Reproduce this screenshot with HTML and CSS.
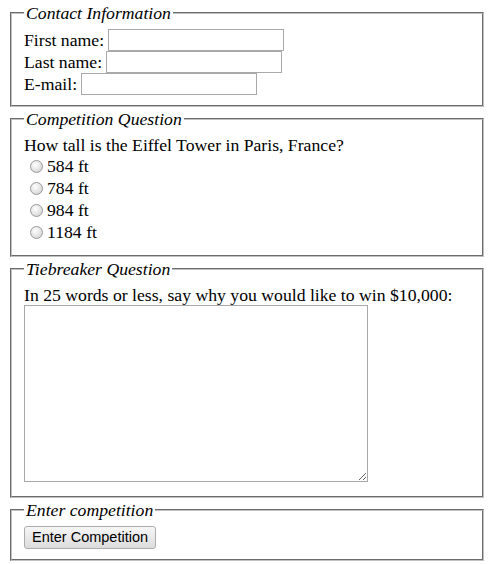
FILE: index.html
```html
<!DOCTYPE html>
<html>
<head>
<meta charset="utf-8">
<title>Competition</title>
<link rel="stylesheet" href="styles.css">
</head>
<body>
<form class="entry-form">
  <fieldset class="group">
    <legend class="group-title">Contact Information</legend>
    <div class="row"><label for="fn">First name:</label><input class="text-input" type="text" id="fn"></div>
    <div class="row"><label for="ln">Last name:</label><input class="text-input" type="text" id="ln"></div>
    <div class="row"><label for="em">E-mail:</label><input class="text-input" type="text" id="em"></div>
  </fieldset>
  <fieldset class="group group-quiz">
    <legend class="group-title">Competition Question</legend>
    <div class="question">How tall is the Eiffel Tower in Paris, France?</div>
    <div class="option"><input class="radio" type="radio" name="h" id="h1"><label for="h1">584 ft</label></div>
    <div class="option"><input class="radio" type="radio" name="h" id="h2"><label for="h2">784 ft</label></div>
    <div class="option"><input class="radio" type="radio" name="h" id="h3"><label for="h3">984 ft</label></div>
    <div class="option"><input class="radio" type="radio" name="h" id="h4"><label for="h4">1184 ft</label></div>
  </fieldset>
  <fieldset class="group">
    <legend class="group-title">Tiebreaker Question</legend>
    <label class="prompt" for="tb">In 25 words or less, say why you would like to win $10,000:</label>
    <textarea class="answer" id="tb"></textarea>
  </fieldset>
  <fieldset class="group group-last">
    <legend class="group-title">Enter competition</legend>
    <button class="submit" type="submit">Enter Competition</button>
  </fieldset>
</form>
</body>
</html>
```

FILE: styles.css
```css
html, body {
  background: #ffffff;
}
body {
  margin: 3px 5px 0 8px;
  font-family: "Liberation Serif", "Times New Roman", serif;
  font-size: 17.7px;
  color: #000;
}
.entry-form {
  display: flex;
  flex-direction: column;
}
.group {
  margin: 0 2px 2px;
  border: 2px groove #c0c0c0;
  padding: 6px 12px 10px;
}
.group-quiz {
  padding-bottom: 12px;
}
.group-title {
  font-style: italic;
  font-size: 17.7px;
  line-height: 20px;
  padding: 0 2px;
}
.row {
  display: flex;
  align-items: center;
  gap: 4px;
  height: 22px;
}
.text-input {
  box-sizing: border-box;
  width: 176px;
  height: 22px;
  margin: 0;
  border: 1px solid #a9a9a9;
  padding: 1px 2px;
  font: inherit;
}
.question {
  display: block;
  line-height: 20px;
}
.prompt {
  display: block;
  line-height: 20px;
}
.option {
  display: flex;
  align-items: center;
  height: 22px;
}
.radio {
  appearance: none;
  -webkit-appearance: none;
  box-sizing: border-box;
  width: 13px;
  height: 13px;
  margin: 0 4px 0 6px;
  border: 1px solid #9a9a9a;
  border-radius: 50%;
  background: radial-gradient(circle at 40% 35%, #ffffff 0%, #e8e8e8 45%, #c9c9c9 100%);
}
.answer {
  display: block;
  box-sizing: border-box;
  width: 344px;
  height: 177px;
  margin: 0 0 4px;
  border: 1px solid #a9a9a9;
  resize: both;
}
.submit {
  align-self: flex-start;
  box-sizing: border-box;
  height: 23px;
  padding: 0 7px;
  margin: -1px 0 0;
  font-family: "Liberation Sans", Arial, sans-serif;
  font-size: 14.5px;
  color: #000;
  border: 1px solid #acacac;
  border-radius: 3px;
  background: linear-gradient(#f6f6f6, #dcdcdc);
}
```
